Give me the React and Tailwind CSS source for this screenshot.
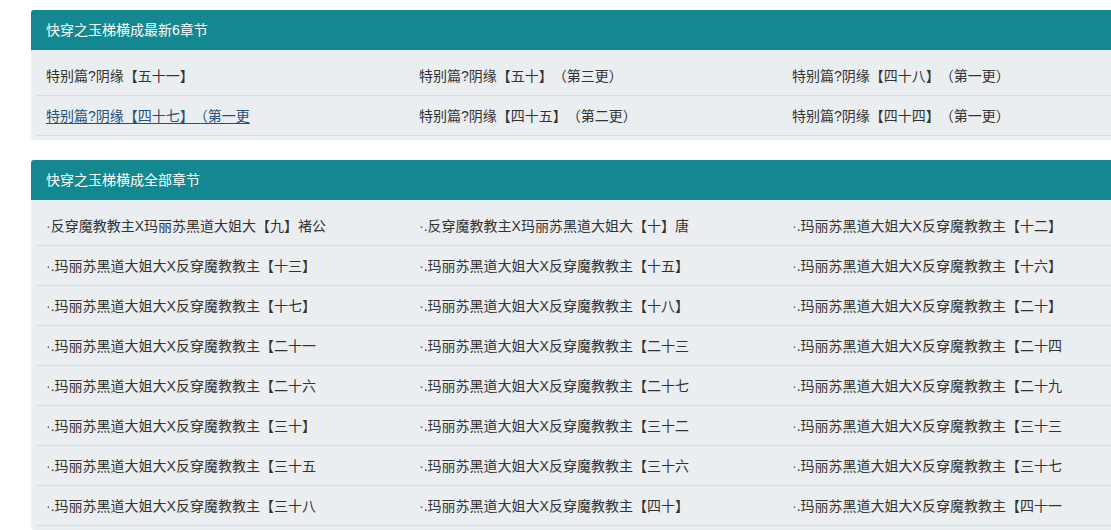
import React from "react";

const latest = [
  "特别篇?阴缘【五十一】",
  "特别篇?阴缘【五十】（第三更）",
  "特别篇?阴缘【四十八】（第一更）",
  "特别篇?阴缘【四十七】（第一更",
  "特别篇?阴缘【四十五】（第二更）",
  "特别篇?阴缘【四十四】（第一更）",
];

const A = ".玛丽苏黑道大姐大X反穿魔教教主";
const all = [
  "反穿魔教教主X玛丽苏黑道大姐大【九】褚公",
  ".反穿魔教教主X玛丽苏黑道大姐大【十】唐",
  A + "【十二】",
  A + "【十三】",
  A + "【十五】",
  A + "【十六】",
  A + "【十七】",
  A + "【十八】",
  A + "【二十】",
  A + "【二十一",
  A + "【二十三",
  A + "【二十四",
  A + "【二十六",
  A + "【二十七",
  A + "【二十九",
  A + "【三十】",
  A + "【三十二",
  A + "【三十三",
  A + "【三十五",
  A + "【三十六",
  A + "【三十七",
  A + "【三十八",
  A + "【四十】",
  A + "【四十一",
];

function Panel({ title, items, dotted, activeIndex }) {
  return (
    <div className="w-[1129px] ml-[31px] rounded-[3px] bg-[#ebeef0] overflow-hidden">
      <div className="h-[40px] bg-[#148890] text-white text-[14px] leading-[40px] pl-[15px]">
        {title}
      </div>
      <ul className="grid grid-cols-[repeat(3,373px)] px-[5px] pt-[6px] pb-[4px]">
        {items.map((t, i) => (
          <li
            key={i}
            className="h-[40px] leading-[40px] border-b border-[#d8dcdf] px-[10px] text-[14px] whitespace-nowrap overflow-hidden"
          >
            <a
              className={
                i === activeIndex
                  ? "text-[#23527c] underline underline-offset-2"
                  : "text-[#333]"
              }
            >
              {dotted ? <span className="text-[#666]">·</span> : null}
              {t}
            </a>
          </li>
        ))}
      </ul>
    </div>
  );
}

export default function App() {
  return (
    <div
      className="w-[1111px] min-h-[530px] overflow-hidden bg-white pt-[10px] [text-spacing-trim:space-all]"
      style={{ fontFamily: '"Liberation Sans", "Noto Sans CJK SC", sans-serif' }}
    >
      <Panel title="快穿之玉梯横成最新6章节" items={latest} activeIndex={3} />
      <div className="h-[20px]" />
      <Panel title="快穿之玉梯横成全部章节" items={all} dotted />
    </div>
  );
}
